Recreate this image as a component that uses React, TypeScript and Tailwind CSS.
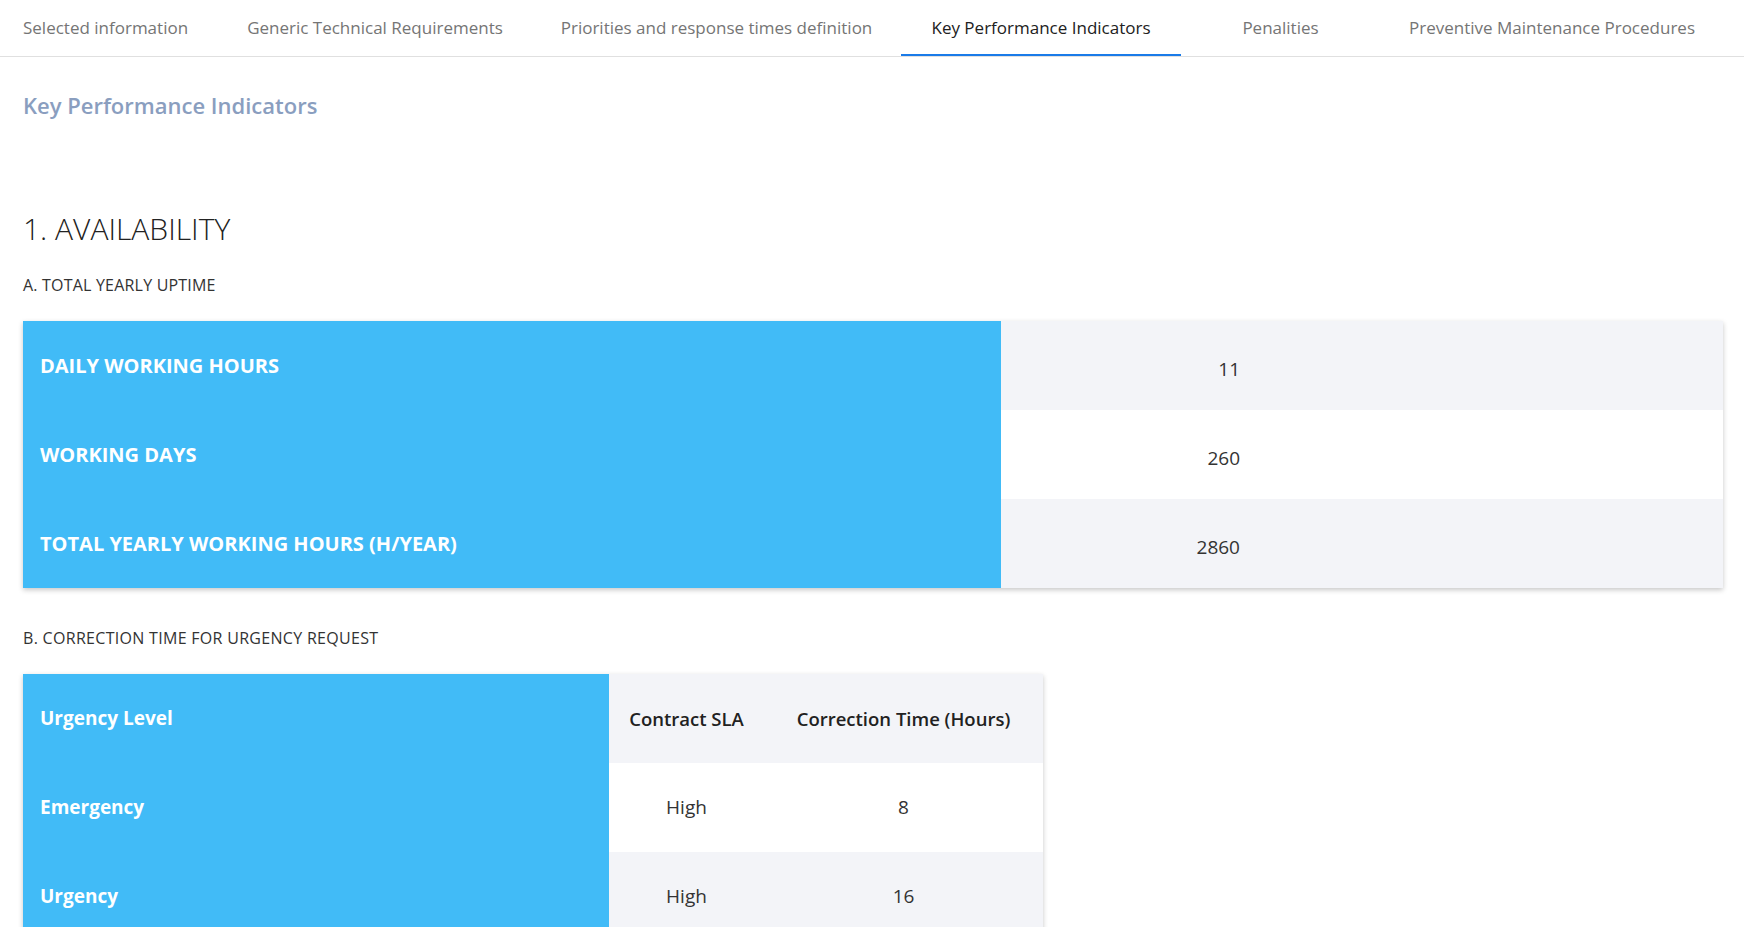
const tabs = [
  { label: "Selected information", w: "w-[218px] justify-start pl-[23px]" },
  { label: "Generic Technical Requirements", w: "w-[314px] justify-center" },
  { label: "Priorities and response times definition", w: "w-[369px] justify-center" },
  { label: "Key Performance Indicators", w: "w-[280px] justify-center", active: true },
  { label: "Penalities", w: "w-[199px] justify-center" },
  { label: "Preventive Maintenance Procedures", w: "w-[344px] justify-center" },
];

const uptime = [
  { label: "DAILY WORKING HOURS", value: "11" },
  { label: "WORKING DAYS", value: "260" },
  { label: "TOTAL YEARLY WORKING HOURS (H/YEAR)", value: "2860" },
];

const urgency = [
  { level: "Emergency", sla: "High", hours: "8" },
  { level: "Urgency", sla: "High", hours: "16" },
];

export default function App() {
  return (
    <div className="min-h-screen bg-white font-['Open_Sans',sans-serif] text-[#212121]">
      {/* tabs */}
      <nav className="flex h-[57px] border-b border-[#e0e0e0]">
        {tabs.map((t) => (
          <div
            key={t.label}
            className={`flex h-full shrink-0 items-center whitespace-nowrap text-[17px] ${t.w} ${
              t.active
                ? "text-[#212121] shadow-[inset_0_-2px_0_#1a7be8]"
                : "text-[#757575]"
            }`}
          >
            {t.label}
          </div>
        ))}
      </nav>

      <div className="px-[23px] pb-10">
        <h1 className="mt-[33px] text-[22px] leading-[30px] font-semibold text-[#8a9ebf]">
          Key Performance Indicators
        </h1>

        <h2 className="mt-[90px] text-[30px] leading-[38px] font-light text-[#222]">
          1. AVAILABILITY
        </h2>

        <h3 className="mt-[26px] text-[16px] leading-[22px] tracking-[0.2px] text-[#333]">
          A. TOTAL YEARLY UPTIME
        </h3>

        <div className="mt-[25px] w-[1700px] shadow-[0_2px_5px_rgba(0,0,0,0.22)]">
          {uptime.map((r, i) => (
            <div key={r.label} className="flex h-[89px]">
              <div className="flex w-[978px] items-center bg-[#41bbf7] pl-[17px] text-[20px] font-bold text-white">
                {r.label}
              </div>
              <div
                className={`flex flex-1 items-center pt-2 text-[19px] text-[#333] ${
                  i % 2 === 0 ? "bg-[#f3f4f8]" : "bg-white"
                }`}
              >
                <div className="w-[239px] text-right">{r.value}</div>
              </div>
            </div>
          ))}
        </div>

        <h3 className="mt-[39px] text-[16px] leading-[22px] tracking-[0.3px] text-[#333]">
          B. CORRECTION TIME FOR URGENCY REQUEST
        </h3>

        <div className="mt-[25px] w-[1020px] shadow-[0_2px_5px_rgba(0,0,0,0.22)]">
          <div className="flex h-[89px]">
            <div className="flex w-[586px] items-center bg-[#41bbf7] pl-[17px] text-[19px] font-bold text-white">
              Urgency Level
            </div>
            <div className="flex w-[155px] items-center justify-center bg-[#f3f4f8] text-[18.5px] font-semibold">
              Contract SLA
            </div>
            <div className="flex w-[279px] items-center justify-center bg-[#f3f4f8] text-[18.5px] font-semibold">
              Correction Time (Hours)
            </div>
          </div>
          {urgency.map((r, i) => (
            <div key={r.level} className="flex h-[89px]">
              <div className="flex w-[586px] items-center bg-[#41bbf7] pl-[17px] text-[19px] font-bold text-white">
                {r.level}
              </div>
              <div
                className={`flex w-[155px] items-center justify-center text-[19px] text-[#333] ${
                  i % 2 === 0 ? "bg-white" : "bg-[#f3f4f8]"
                }`}
              >
                {r.sla}
              </div>
              <div
                className={`flex w-[279px] items-center justify-center text-[19px] text-[#333] ${
                  i % 2 === 0 ? "bg-white" : "bg-[#f3f4f8]"
                }`}
              >
                {r.hours}
              </div>
            </div>
          ))}
        </div>
      </div>
    </div>
  );
}
